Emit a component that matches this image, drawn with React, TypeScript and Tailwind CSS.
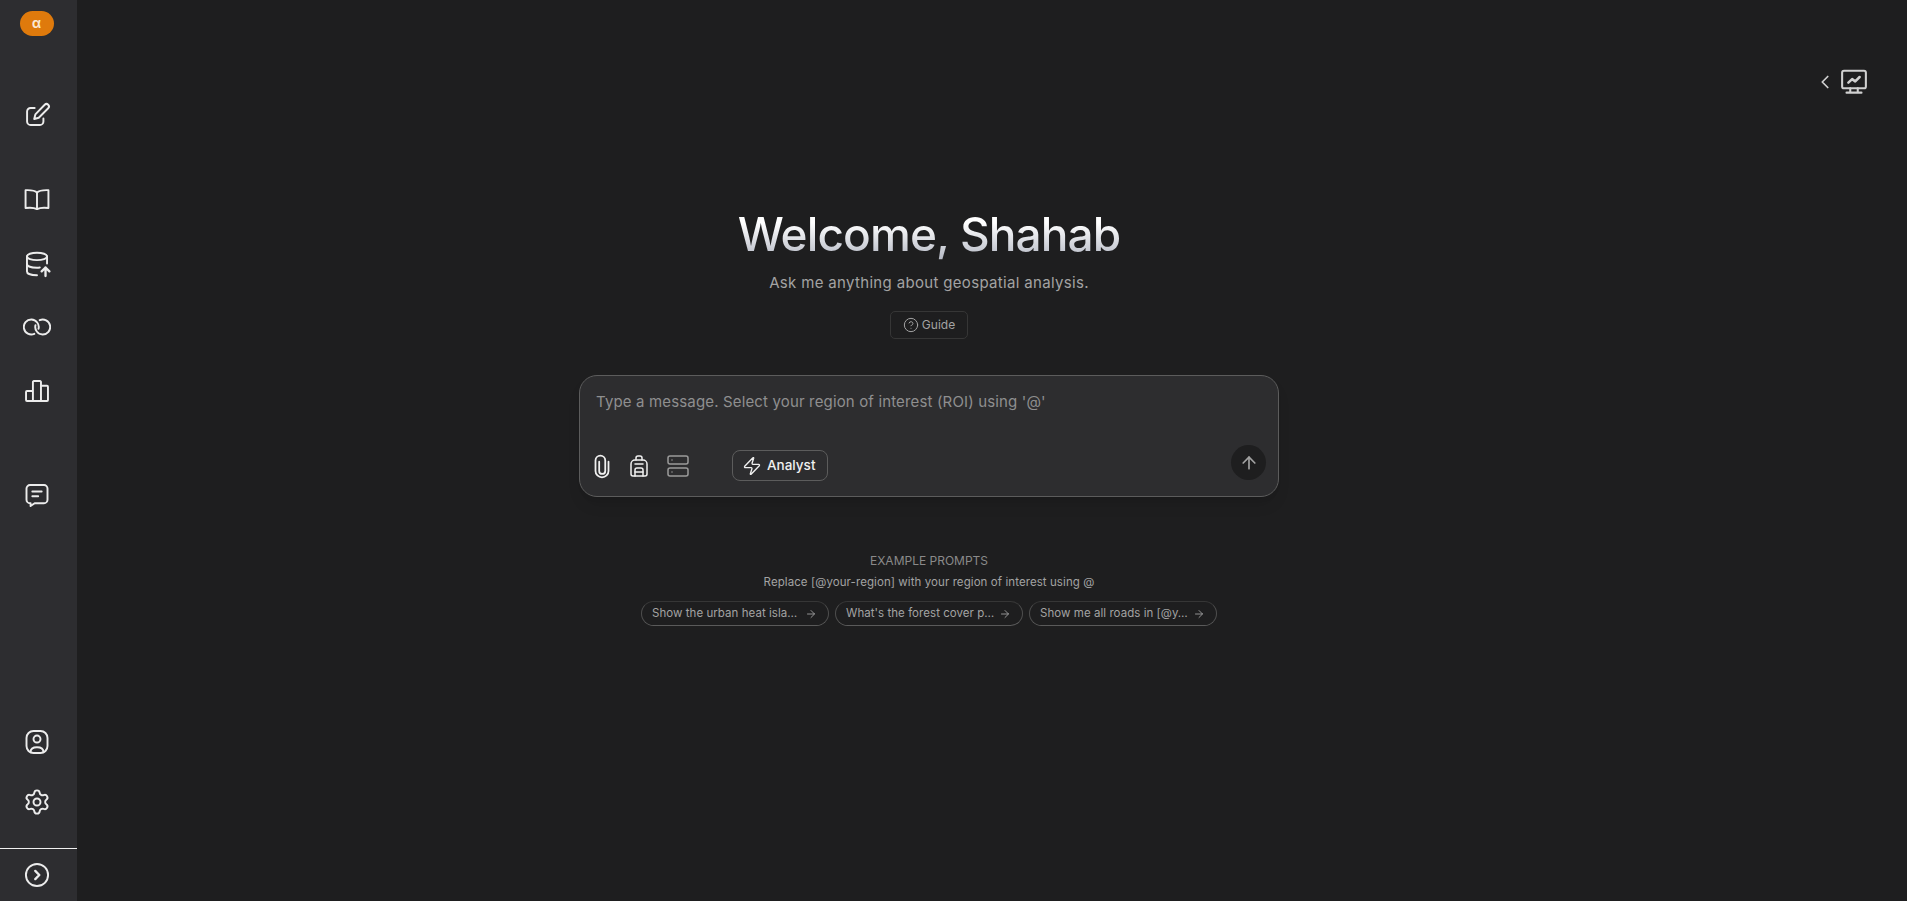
import { ArrowRight, ArrowUp, Backpack, ChevronLeft, CircleHelp, Server, Settings, Zap } from "lucide-react";
import type { ReactNode } from "react";

const font = { fontFamily: "Inter, 'Liberation Sans', sans-serif" };

function Ico({ children, className = "w-7 h-7" }: { children: ReactNode; className?: string }) {
  return (
    <svg viewBox="0 0 24 24" fill="none" stroke="currentColor" strokeWidth="1.65" strokeLinecap="round" strokeLinejoin="round" className={className}>
      {children}
    </svg>
  );
}

function Prompt({ text }: { text: string }) {
  return (
    <button className="flex items-center justify-between w-[188px] h-[25px] pl-[10px] pr-[10px] rounded-full border border-[#4f4f4f] border-t-[#363636] border-b-[#5a5a5a] text-[11.5px] text-[#a3a3a3] tracking-[0.05px]">
      <span className="whitespace-nowrap">{text}</span>
      <ArrowRight className="w-[12px] h-[12px] mr-[1px]" strokeWidth={1.75} />
    </button>
  );
}

export default function App() {
  return (
    <div className="flex w-full h-[901px] overflow-hidden bg-[#1e1e1f] text-white" style={font}>
      <aside className="w-[77px] shrink-0 h-full bg-[#2d2d30] flex flex-col text-[#ececec]">
        <div className="flex-1 flex flex-col items-center pr-[4px]">
          <div className="mt-[11px] w-[34px] h-[25px] rounded-full bg-[#df7a0c] flex items-center justify-center text-[13px] font-bold text-[#fbe9d5]">α</div>
          <div className="mt-[65px]">
            <Ico>
              <path d="M10 6H6.500a3 3 0 0 0-3 3v8.500a3 3 0 0 0 3 3h8a3 3 0 0 0 3-3V15" />
              <path d="M18.600 3.200a2.100 2.100 0 0 1 3 3L13.500 14.400 9.600 15.400l1-3.900z" />
            </Ico>
          </div>
          <div className="mt-[56px]">
            <Ico>
              <path d="M12 6.500C10.500 4.900 7 4.200 2.200 4.400v15.300c4.800-.6 8 0 9.800 1 1.800-1 5-1.600 9.800-1V4.400C17 4.200 13.500 4.900 12 6.500z" />
              <path d="M12 6.500v14" />
            </Ico>
          </div>
          <div className="mt-[37px]">
            <Ico>
              <ellipse cx="12" cy="5.500" rx="8.600" ry="3.200" />
              <path d="M3.400 5.500v13c0 1.800 3.600 3.200 8.600 3.200" />
              <path d="M3.400 12c0 1.800 3.600 3.200 8.600 3.200.8 0 1.700-.1 2.400-.2" />
              <path d="M20.600 5.500v6" />
              <path d="M19.300 22.300V15M16 18.300l3.300-3.300 3.300 3.300" strokeWidth="2" />
            </Ico>
          </div>
          <div className="mt-[35px]">
            <Ico>
              <path d="M9.700 17.850A6.400 6.400 0 1 1 13.310 13.550" />
              <path d="M14.300 6.150A6.400 6.400 0 1 1 10.690 10.450" />
            </Ico>
          </div>
          <div className="mt-[36px]">
            <Ico>
              <path d="M8.500 12H3.400a.8.8 0 0 0-.8.8v6.900a.8.8 0 0 0 .8.8h5.100zM8.500 20.500V4.300a.8.8 0 0 1 .8-.8h5.300a.8.8 0 0 1 .8.8v16.200zM15.400 7.500h5.200a.8.8 0 0 1 .8.8v11.400a.8.8 0 0 1-.8.8h-5.200z" />
            </Ico>
          </div>
          <div className="mt-[76px]">
            <Ico>
              <path d="M6 3.500h12a3 3 0 0 1 3 3v9.500a3 3 0 0 1-3 3h-8l-3.500 2.500V19H6a3 3 0 0 1-3-3V6.500a3 3 0 0 1 3-3z" />
              <path d="M8 9h8M8 13h5" />
            </Ico>
          </div>
          <div className="mt-auto">
            <Ico>
              <rect x="3" y="2.500" width="18" height="19" rx="6" />
              <circle cx="12" cy="9.500" r="3" />
              <path d="M6.500 20.500c0-3 2.500-4 5.500-4s5.500 1 5.500 4" />
            </Ico>
          </div>
          <div className="mt-[32px] mb-[32px]">
            <Settings className="w-7 h-7" strokeWidth={1.65} />
          </div>
        </div>
        <div className="w-full h-[53px] pr-[4px] border-t border-[#f0f0f0] flex items-center justify-center">
          <Ico>
            <circle cx="12" cy="12" r="9.500" />
            <path d="M10.500 8.500l3.500 3.500-3.500 3.500" strokeWidth="2" />
          </Ico>
        </div>
      </aside>

      <main className="flex-1 flex flex-col items-center pt-[206px]">
        <h1 className="text-[46px] leading-[56px] font-[540] tracking-[-0.9px] bg-gradient-to-b from-white from-[30%] to-[#b0b4c0] bg-clip-text text-transparent">
          Welcome, Shahab
        </h1>
        <p className="mt-[9px] text-[15px] leading-6 text-[#a3a3a3] tracking-[0.33px]">Ask me anything about geospatial analysis.</p>
        <button className="mt-[16px] w-[78px] h-[28px] flex items-center justify-center gap-[3px] rounded-[5px] border border-[#363636] text-[12px] text-[#a3a3a3]">
          <CircleHelp className="w-[16px] h-[16px]" strokeWidth={1.5} />
          Guide
        </button>

        <div className="mt-[36px] w-[700px] h-[122px] rounded-[18px] bg-[#2d2d2f] border border-[#5c5c5c] shadow-lg flex flex-col px-[15px] pt-[14px]">
          <div className="pl-[1px] text-[15px] leading-6 text-[#8f8f8f] tracking-[0.15px]">Type a message. Select your region of interest (ROI) using '@'</div>
          <div className="mt-[36px] flex items-center">
            <Ico className="w-[26px] h-[26px] -ml-[6px] text-[#f0f0f0]">
              <path d="M18 8v8.500a6 6 0 0 1-12 0V7a4.500 4.500 0 0 1 9 0v9.500a2.800 2.800 0 0 1-5.600 0V8" />
            </Ico>
            <Backpack className="ml-[12px] w-[24px] h-[24px] text-[#f0f0f0]" strokeWidth={1.5} />
            <Server className="ml-[15px] w-[24px] h-[24px] text-[#9a9a9a]" strokeWidth={1.5} />
            <div className="ml-[42px] w-[96px] h-[31px] flex items-center gap-[5px] pl-[9px] rounded-[8px] border border-[#5c5c5c] text-[13.5px] font-medium text-[#f0f0f0]">
              <Zap className="w-[20px] h-[20px]" strokeWidth={1.65} />
              Analyst
            </div>
            <div className="ml-auto -mt-[6px] -mr-[3px] w-[35px] h-[35px] rounded-full bg-[#1e1e1f] flex items-center justify-center text-[#a3a3a3]">
              <ArrowUp className="w-[20px] h-[20px]" strokeWidth={2} />
            </div>
          </div>
        </div>

        <div className="mt-[56px] text-[12px] leading-4 text-[#8a8a8a]">EXAMPLE PROMPTS</div>
        <div className="mt-[5px] text-[11.5px] leading-4 text-[#a3a3a3] tracking-[0.08px]">Replace [@your-region] with your region of interest using @</div>
        <div className="mt-[11px] flex gap-[6px]">
          <Prompt text="Show the urban heat isla…" />
          <Prompt text="What's the forest cover p…" />
          <Prompt text="Show me all roads in [@y…" />
        </div>
      </main>

      <div className="w-[126px] shrink-0 flex justify-start pt-[68px] pl-[33px] text-[#d0d0d0]">
        <div className="flex items-center h-[28px] gap-[3px]">
          <ChevronLeft className="w-[22px] h-[22px]" strokeWidth={1.9} />
          <Ico className="w-[30px] h-[30px]">
            <rect x="2.500" y="3" width="19" height="14" rx="1.500" />
            <path d="M6 20.500h12M9 17v3.500M15 17v3.500" />
            <path d="M7.500 12.500l3-2.800 2.500 1.800 3.500-3.500" strokeWidth="2" />
          </Ico>
        </div>
      </div>
    </div>
  );
}
